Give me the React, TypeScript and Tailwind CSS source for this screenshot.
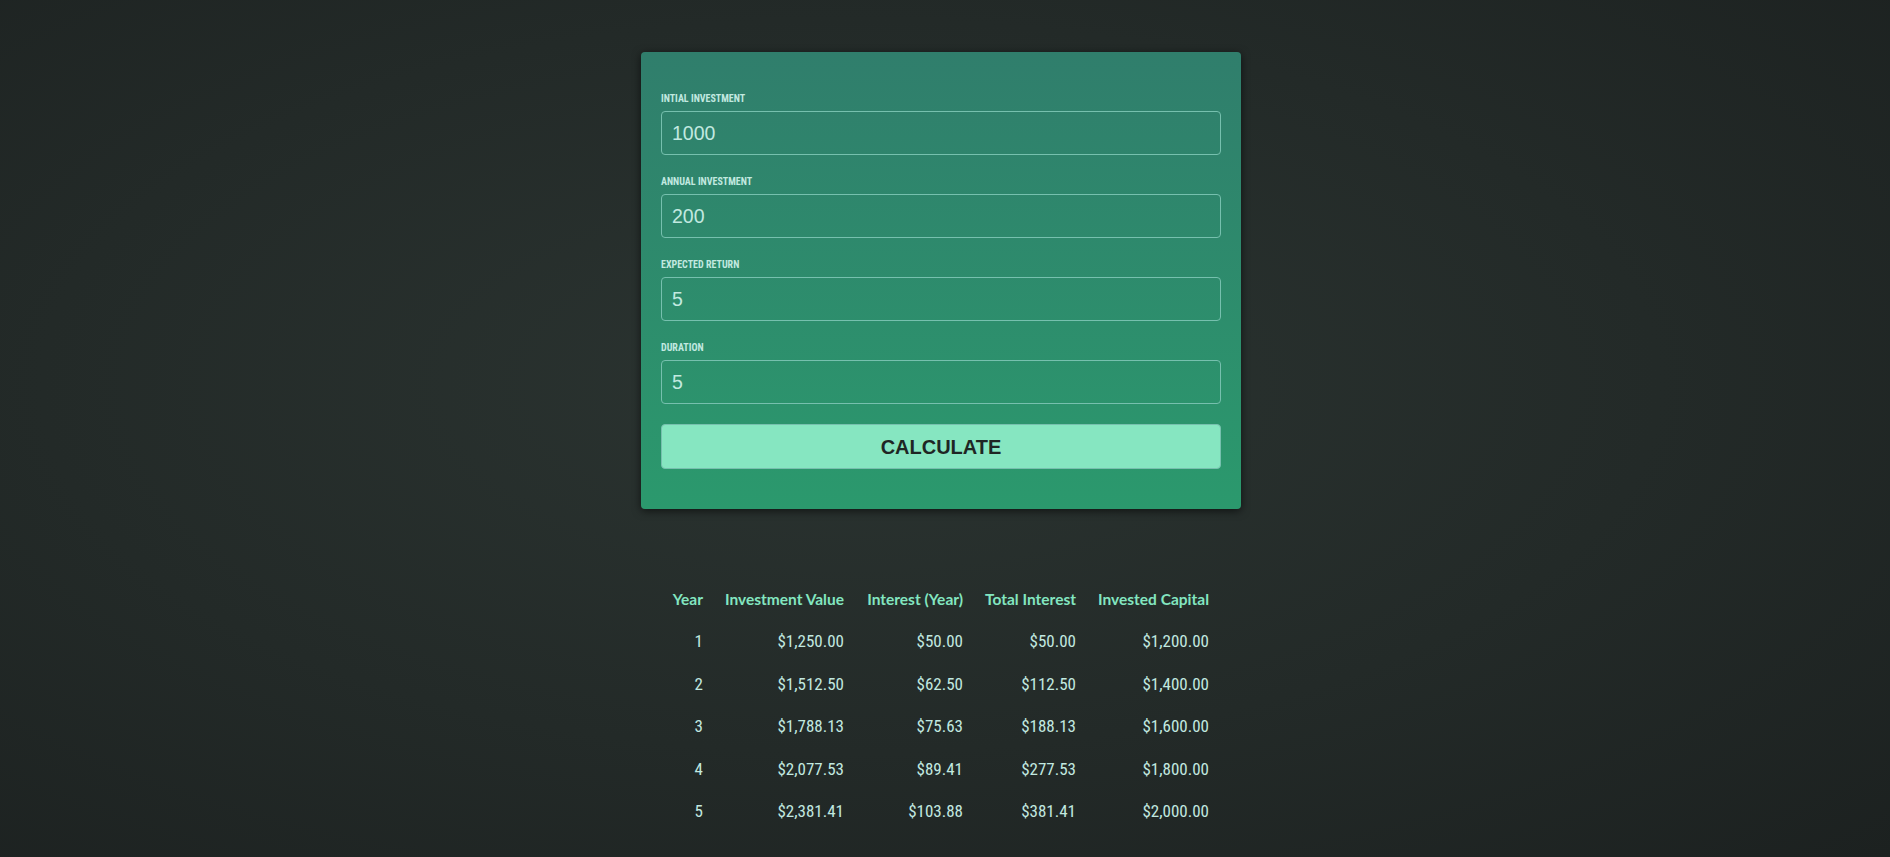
import React from "react";

const narrow = "font-['Roboto_Condensed','Liberation_Sans_Narrow','DejaVu_Sans_Condensed',sans-serif]";

const fields = [
  { label: "INTIAL INVESTMENT", value: "1000" },
  { label: "ANNUAL INVESTMENT", value: "200" },
  { label: "EXPECTED RETURN", value: "5" },
  { label: "DURATION", value: "5" },
];

const headers = ["Year", "Investment Value", "Interest (Year)", "Total Interest", "Invested Capital"];

const rows = [
  ["1", "$1,250.00", "$50.00", "$50.00", "$1,200.00"],
  ["2", "$1,512.50", "$62.50", "$112.50", "$1,400.00"],
  ["3", "$1,788.13", "$75.63", "$188.13", "$1,600.00"],
  ["4", "$2,077.53", "$89.41", "$277.53", "$1,800.00"],
  ["5", "$2,381.41", "$103.88", "$381.41", "$2,000.00"],
];

export default function App() {
  return (
    <div className="h-screen w-full overflow-hidden bg-[radial-gradient(ellipse_at_45%_45%,#2b3431_0%,#232a28_55%,#1c2120_100%)] pr-[8px]">
      <div className="mx-auto w-[600px] pt-[52px]">
        <form
          className="rounded-[4px] bg-[linear-gradient(180deg,#307e6c,#2b996d)] px-[20px] pt-[41px] pb-[40px] shadow-[0_2px_8px_rgba(0,0,0,0.6)]"
          onSubmit={(e) => e.preventDefault()}
        >
          <div className="flex flex-col gap-[21px]">
            {fields.map((f) => (
              <div key={f.label} className="flex flex-col">
                <label
                  className={`${narrow} mb-[6px] block text-[10px] leading-[12px] font-bold text-[#c2e9e0]`}
                >
                  {f.label}
                </label>
                <input
                  type="number"
                  defaultValue={f.value}
                  className="h-[44px] w-full rounded-[4px] border border-[#76c0ae] bg-transparent px-[10px] font-['Liberation_Sans',Arial,sans-serif] text-[19.5px] text-[#c2e9e0] outline-none [appearance:textfield] [&::-webkit-inner-spin-button]:appearance-none [&::-webkit-outer-spin-button]:appearance-none"
                />
              </div>
            ))}
          </div>
          <button
            type="submit"
            className="mt-[20px] h-[45px] w-full rounded-[4px] border border-[#76c0ae] bg-[#86e6c1] font-['Liberation_Sans',Arial,sans-serif] text-[20px] font-bold text-[#1f2624]"
          >
            CALCULATE
          </button>
        </form>

        <div className="mt-[69px] pl-[20px]">
          <div className="grid grid-cols-[42px_141px_119px_113px_133px] auto-rows-[42.5px]">
            {headers.map((h) => (
              <div
                key={h}
                className="flex items-center justify-end font-['Lato',sans-serif] text-[15.5px] font-bold text-[#83e6c0]"
              >
                {h}
              </div>
            ))}
            {rows.map((r) =>
              r.map((c, i) => (
                <div
                  key={r[0] + "-" + i}
                  className={`${narrow} flex items-center justify-end text-[17px] text-[#c2e9e0]`}
                >
                  {c}
                </div>
              ))
            )}
          </div>
        </div>
      </div>
    </div>
  );
}
